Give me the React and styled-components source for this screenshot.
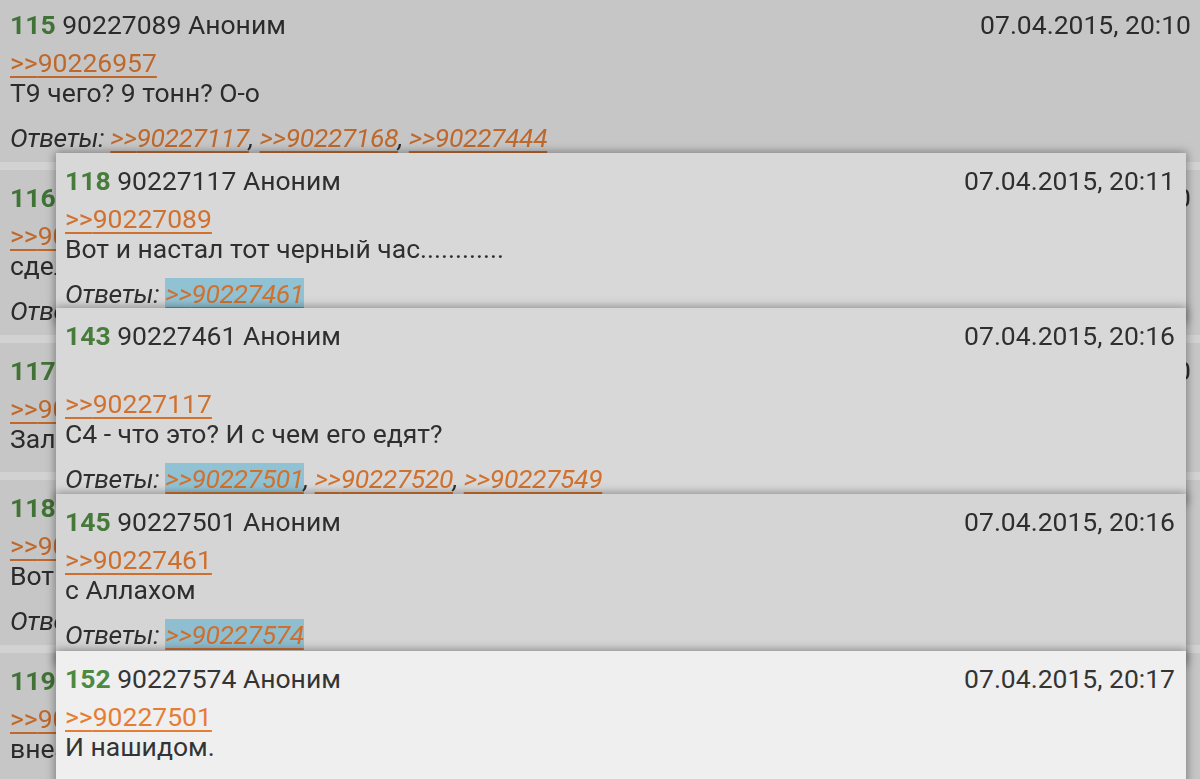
import React from 'react';
import styled, { createGlobalStyle } from 'styled-components';

const Global = createGlobalStyle`
  html, body { margin: 0; padding: 0; overflow: hidden; background: #d2d2d2; }
  body { font-family: Roboto, "Noto Sans", "DejaVu Sans", sans-serif; }
  * { box-sizing: border-box; }
`;

const Screen = styled.div`
  position: relative;
  width: 1200px;
  height: 779px;
  overflow: hidden;
`;

const Thread = styled.div`
  display: flex;
  flex-direction: column;
  gap: 8px;
  margin-top: -3px;
  background: #fdfdfd;
  filter: brightness(0.83);
`;

const Card = styled.article`
  background: #efefef;
  padding: 12px 9px 9px 10px;
  font-size: 26.5px;
  color: #343434;
  white-space: nowrap;
`;

const Popup = styled(Card)`
  position: absolute;
  left: 56px;
  width: 1130px;
  min-height: 170px;
  padding: 12px 11px 9px 9px;
  box-shadow: 0 0 9px 1px rgba(0, 0, 0, 0.38);
  filter: ${(p) => (p.$dim ? `brightness(${p.$dim})` : 'none')};
`;

const Header = styled.header`
  display: flex;
  justify-content: space-between;
  align-items: center;
  height: 32px;
  line-height: 32px;
`;

const Num = styled.b`
  color: #4e8941;
  font-weight: 700;
`;

const Comment = styled.div`
  margin-top: 7px;
  margin-bottom: 9px;
`;

const Line = styled.div`
  line-height: 30px;
  min-height: 30px;
`;

const Link = styled.a`
  color: #e67d34;
  text-decoration: underline;
  text-decoration-thickness: 2px;
  text-underline-offset: 4px;
  background: ${(p) => (p.$active ? '#a0d6ea' : 'transparent')};
  cursor: pointer;
`;

const Replies = styled.div`
  margin-top: 15px;
  line-height: 30px;
  font-style: italic;
  letter-spacing: -0.4px;
`;

const threadPosts = [
  {
    num: 115, id: '90227089', date: '07.04.2015, 20:10',
    lines: [{ link: '90226957' }, 'Т9 чего? 9 тонн? О-о'],
    replies: ['90227117', '90227168', '90227444'],
  },
  {
    num: 116, id: '90227096', date: '07.04.2015, 20:10',
    lines: [{ link: '90227089' }, 'сделай скрин, посмотрим'],
    replies: ['90227130'],
  },
  {
    num: 117, id: '90227108', date: '07.04.2015, 20:10',
    lines: [{ link: '90227089' }, 'Залей на вики лучше'],
    replies: [],
  },
  {
    num: 118, id: '90227117', date: '07.04.2015, 20:11',
    lines: [{ link: '90227089' }, 'Вот и настал тот черный час............'],
    replies: ['90227461'],
  },
  {
    num: 119, id: '90227121', date: '07.04.2015, 20:11',
    lines: [{ link: '90227089' }, 'внезапно, это оказался танк'],
    replies: ['90227160'],
  },
];

const popups = [
  {
    top: 153, dim: 0.905,
    num: 118, id: '90227117', date: '07.04.2015, 20:11',
    lines: [{ link: '90227089' }, 'Вот и настал тот черный час............'],
    replies: ['90227461'], active: '90227461',
  },
  {
    top: 308, dim: 0.905,
    num: 143, id: '90227461', date: '07.04.2015, 20:16',
    lines: ['', { link: '90227117' }, 'С4 - что это? И с чем его едят?'],
    replies: ['90227501', '90227520', '90227549'], active: '90227501',
  },
  {
    top: 494, dim: 0.89,
    num: 145, id: '90227501', date: '07.04.2015, 20:16',
    lines: [{ link: '90227461' }, 'с Аллахом'],
    replies: ['90227574'], active: '90227574',
  },
  {
    top: 651, dim: 0,
    num: 152, id: '90227574', date: '07.04.2015, 20:17',
    lines: [{ link: '90227501' }, 'И нашидом.'],
    replies: [],
  },
];

function PostBody({ post }) {
  return (
    <>
      <Header>
        <span>
          <Num>{post.num}</Num> {post.id} Аноним
        </span>
        <span>{post.date}</span>
      </Header>
      <Comment>
        {post.lines.map((l, i) => (
          <Line key={i}>
            {typeof l === 'string' ? l : <Link>&gt;&gt;{l.link}</Link>}
          </Line>
        ))}
      </Comment>
      {post.replies.length > 0 && (
        <Replies>
          Ответы:{' '}
          {post.replies.map((r, i) => (
            <React.Fragment key={r}>
              {i > 0 && ', '}
              <Link $active={post.active === r}>&gt;&gt;{r}</Link>
            </React.Fragment>
          ))}
        </Replies>
      )}
    </>
  );
}

export default function App() {
  return (
    <Screen>
      <Global />
      <Thread>
        {threadPosts.map((p) => (
          <Card key={p.num}>
            <PostBody post={p} />
          </Card>
        ))}
      </Thread>
      {popups.map((p) => (
        <Popup key={p.num} $dim={p.dim} style={{ top: p.top }}>
          <PostBody post={p} />
        </Popup>
      ))}
    </Screen>
  );
}
